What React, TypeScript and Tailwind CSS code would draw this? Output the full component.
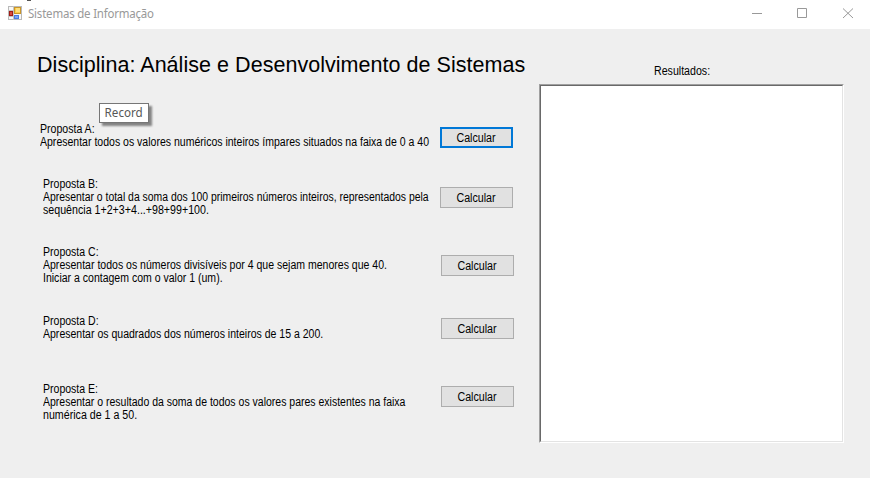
type Proposal = { row: string; button: string; lines: [text: string, scale: string][] };

const proposals: Proposal[] = [
  {
    row: "h-[55px] pl-[40px]",
    button: "mr-[27px] mt-[4px] border-2 border-[#0078d7]",
    lines: [
      ["Proposta A:", "scale-x-[0.88]"],
      ["Apresentar todos os valores numéricos inteiros ímpares situados na faixa de 0 a 40", "scale-x-[0.877]"],
    ],
  },
  {
    row: "h-[68px] pl-[43px]",
    button: "mr-[27px] mt-[9px] border border-[#adadad]",
    lines: [
      ["Proposta B:", "scale-x-[0.877]"],
      ["Apresentar o total da soma dos 100 primeiros números inteiros, representados pela", "scale-x-[0.868]"],
      ["sequência 1+2+3+4...+98+99+100.", "scale-x-[0.888]"],
    ],
  },
  {
    row: "h-[69px] pl-[43px]",
    button: "mr-[26px] mt-[9px] border border-[#adadad]",
    lines: [
      ["Proposta C:", "scale-x-[0.877]"],
      ["Apresentar todos os números divisíveis por 4 que sejam menores que 40.", "scale-x-[0.877]"],
      ["Iniciar a contagem com o valor 1 (um).", "scale-x-[0.877]"],
    ],
  },
  {
    row: "h-[68px] pl-[43px]",
    button: "mr-[26px] mt-[3px] border border-[#adadad]",
    lines: [
      ["Proposta D:", "scale-x-[0.877]"],
      ["Apresentar os quadrados dos números inteiros de 15 a 200.", "scale-x-[0.877]"],
    ],
  },
  {
    row: "h-[60px] pl-[43px]",
    button: "mr-[26px] mt-[3px] border border-[#adadad]",
    lines: [
      ["Proposta E:", "scale-x-[0.877]"],
      ["Apresentar o resultado da soma de todos os valores pares existentes na faixa", "scale-x-[0.875]"],
      ["numérica de 1 a 50.", "scale-x-[0.888]"],
    ],
  },
];

function FormIcon() {
  return (
    <svg width="15" height="15" viewBox="0 0 15 15" shapeRendering="crispEdges">
      <rect x="0.5" y="0.5" width="13" height="13" fill="#f7f7f7" stroke="#b9b9b9" />
      <path d="M5.5 0v14M0 4.5h5M0 10.5h5" stroke="#c4c4c4" />
      <rect x="6.5" y="1.5" width="6" height="6" fill="#fccb45" stroke="#c9952a" />
      <rect x="8" y="2" width="4" height="4" fill="#ffde7a" />
      <rect x="1.5" y="5.5" width="3" height="4" fill="#d94a3d" stroke="#a01c16" />
      <rect x="6" y="9" width="5" height="4" fill="#4a7de0" />
      <rect x="7" y="10" width="3" height="2" fill="#7ba4f5" />
    </svg>
  );
}

function TitleBar() {
  return (
    <header className="relative flex h-[29px] bg-white pl-[8px]">
      <svg className="absolute left-[27px] top-0" width="5" height="2"><path d="M0 .5h4" stroke="#555" /></svg>
      <span className="pt-[6px]"><FormIcon /></span>
      <h1 className="ml-[5px] origin-left scale-x-[0.955] pt-[6px] font-['Noto_Sans',sans-serif] text-[12px] leading-[16px] tracking-[-0.2px] whitespace-nowrap text-[#999]">
        Sistemas de Informação
      </h1>
      <svg className="ml-auto" width="122" height="29" viewBox="748 0 122 29" fill="none" stroke="#999">
        <path d="M752 13.5h10" />
        <path d="M797.5 8.5h9v9h-9z" />
        <path d="m843 8.5 10 9.5m0-9.5-10 9.5" />
      </svg>
    </header>
  );
}

function ProposalRow({ row, button, lines }: Proposal) {
  return (
    <section className={`flex ${row}`}>
      <div className="w-0 flex-1">
        {lines.map(([text, scale]) => (
          <p key={text} className={`w-max origin-left whitespace-nowrap ${scale}`}>{text}</p>
        ))}
      </div>
      <button className={`flex h-[21px] w-[73px] shrink-0 items-center justify-center bg-[#e1e1e1] pr-px ${button}`}>
        <span className="block scale-x-[0.89] pt-px">Calcular</span>
      </button>
    </section>
  );
}

export default function App() {
  return (
    <div className="flex h-[478px] w-[870px] flex-col overflow-hidden bg-[#efefef] font-['Liberation_Sans',Arial,sans-serif] text-[12px] leading-[13px] text-black">
      <TitleBar />
      <main className="flex flex-1">
        <div className="relative w-[540px] pt-[24px]">
          <h2 className="h-[70px] pl-[37px] text-[21.5px] leading-[24px] tracking-[0.04px] whitespace-nowrap">
            Disciplina: Análise e Desenvolvimento de Sistemas
          </h2>
          {proposals.map((p) => <ProposalRow key={p.lines[0][0]} {...p} />)}
          <div className="absolute left-[99px] top-[74px] flex h-[20px] w-[50px] items-center justify-center border border-[#767676] bg-white font-['Noto_Sans',sans-serif] text-[12px] text-[#575757] shadow-[3px_3px_2px_rgba(0,0,0,0.45)]">
            <span className="-mt-px block scale-x-[0.97]">Record</span>
          </div>
        </div>
        <aside className="-ml-px w-[305px] pt-[36px]">
          <h3 className="ml-[115px] h-[19px] w-max origin-left scale-x-[0.885]">Resultados:</h3>
          <div className="h-[359px] border border-t-[#a0a0a0] border-r-white border-b-white border-l-[#a0a0a0]">
            <div className="h-full border border-t-[#696969] border-r-[#e3e3e3] border-b-[#e3e3e3] border-l-[#696969] bg-white" />
          </div>
        </aside>
      </main>
    </div>
  );
}
